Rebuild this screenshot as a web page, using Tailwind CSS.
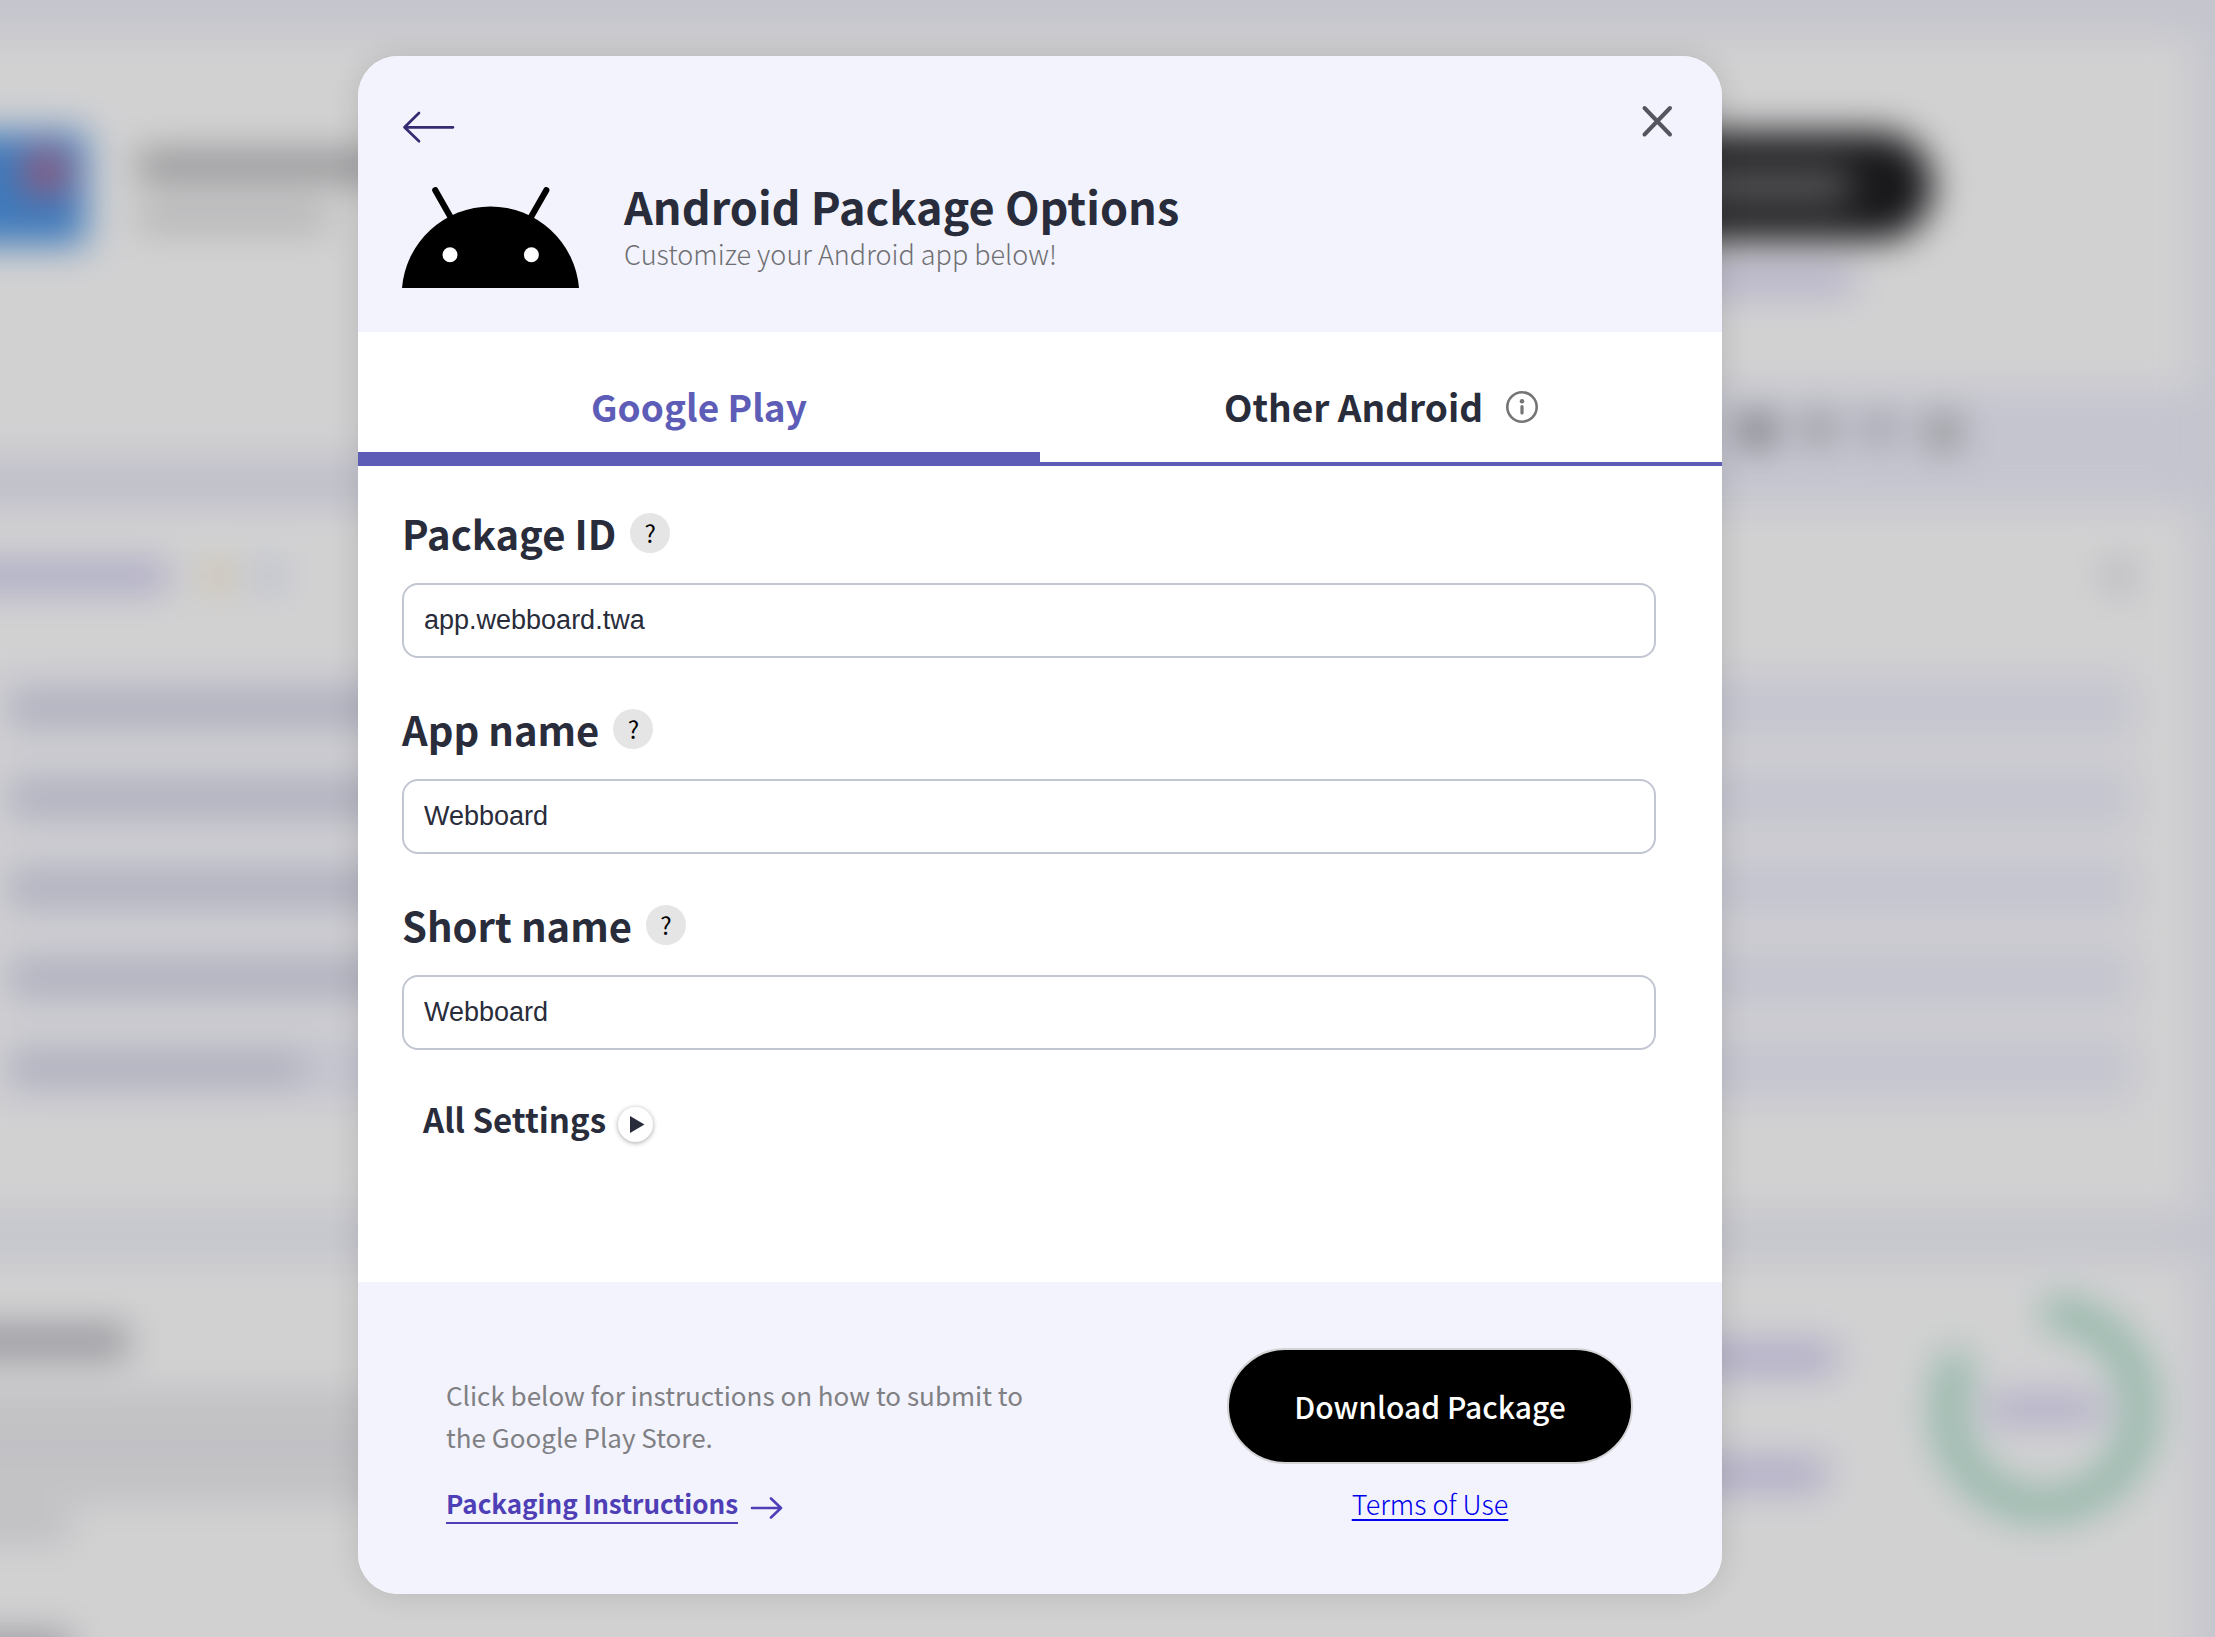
<!DOCTYPE html>
<html lang="en">
<head>
<meta charset="utf-8">
<title>Android Package Options</title>
<script src="https://cdn.jsdelivr.net/npm/@tailwindcss/browser@4"></script>
</head>
<body class="relative min-h-screen overflow-x-hidden bg-[#c5c5ce] font-['Noto_Sans_CJK_SC','Noto_Sans',sans-serif] text-[#292c3a]">

<!-- Report page, out of focus behind the dialog -->
<div aria-hidden="true" class="absolute inset-0 overflow-hidden">
  <div class="flex h-full flex-col pt-9 pr-5 blur-[18px]">
    <!-- App card -->
    <section class="-ml-20 flex h-[352px] flex-none justify-between bg-[#d1d1d2] pt-24">
      <div class="flex gap-[52px]">
        <div class="flex h-[113px] w-[166px] items-start justify-end bg-[#3f7abb] p-4"><div class="size-12 rounded-full bg-[#94597a]"></div></div>
        <div class="flex flex-col gap-7 pt-5">
          <div class="h-7 w-[250px] bg-[#8d8d8f]"></div>
          <div class="h-5 w-[190px] bg-[#a8a8aa]"></div>
        </div>
      </div>
      <div class="flex flex-col items-start gap-7 pr-[262px]">
        <div class="flex h-[108px] w-[400px] items-center rounded-full bg-[#18181a] px-20"><div class="h-9 w-[270px] rounded-full bg-[#58585a]"></div></div>
        <div class="h-6 w-[320px] bg-[#aeaac6]"></div>
      </div>
    </section>
    <div class="-ml-20 flex h-[116px] flex-none items-start justify-end">
      <div class="h-full flex-1 bg-[#d1d1d2] pt-[70px]"><div class="h-[46px] bg-[#bfbfca]"></div></div>
      <div class="flex h-full w-[900px] justify-end gap-7 bg-[#c5c5d0] pt-6 pr-[232px]">
        <div class="size-9 rounded-full bg-[#6c6c70]"></div>
        <div class="size-8 rounded-full bg-[#8a8a8e]"></div>
        <div class="size-8 rounded-full bg-[#96969e]"></div>
        <div class="size-10 rounded-full bg-[#929295]"></div>
      </div>
    </div>
    <!-- Action items card -->
    <section class="-ml-20 mt-1 h-[704px] flex-none bg-[#d1d1d2] pt-[52px] pr-[60px] pl-20">
      <div class="flex h-8 items-center justify-between">
        <div class="-ml-20 flex items-center">
          <div class="h-7 w-[248px] bg-[#a9a6c4]"></div>
          <div class="ml-9 size-7 rounded-full bg-[#cbbb9c]"></div>
          <div class="ml-6 size-6 rounded-full bg-[#aab0cc]"></div>
        </div>
        <div class="size-8 rounded-full bg-[#b2b2b8]"></div>
      </div>
      <div class="mt-[84px] flex flex-col gap-[26px]">
        <div class="flex h-16 items-center bg-[#c5c5d0] pl-3"><div class="h-6 w-[400px] bg-[#a9a9b7]"></div></div>
        <div class="flex h-16 items-center bg-[#c5c5d0] pl-3"><div class="h-6 w-[400px] bg-[#a9a9b7]"></div></div>
        <div class="flex h-16 items-center bg-[#c5c5d0] pl-3"><div class="h-6 w-[400px] bg-[#a9a9b7]"></div></div>
        <div class="flex h-16 items-center bg-[#c5c5d0] pl-3"><div class="h-6 w-[400px] bg-[#a9a9b7]"></div></div>
        <div class="flex h-16 items-center bg-[#c5c5d0] pl-3"><div class="h-6 w-[290px] bg-[#a9a9b7]"></div></div>
      </div>
    </section>
    <!-- Manifest card -->
    <section class="-ml-20 mt-12 flex h-[480px] flex-none justify-between bg-[#d1d1d2] pt-[36px] pr-[38px]">
      <div class="pt-[30px]">
        <div class="h-8 w-[208px] bg-[#95959b]"></div>
        <div class="mt-9 flex w-[580px] flex-col gap-4">
          <div class="h-6 bg-[#bbbbbf]"></div>
          <div class="h-6 bg-[#b6b6bb]"></div>
          <div class="h-6 bg-[#bbbbbf]"></div>
          <div class="h-6 w-[150px] bg-[#b8b8bc]"></div>
        </div>
        <div class="mt-24 h-8 w-[150px] bg-[#95959b]"></div>
      </div>
      <div class="flex">
        <div class="flex w-[420px] flex-col gap-[88px] pt-[48px]">
          <div class="h-7 w-[325px] bg-[#a9a5c4]"></div>
          <div class="h-7 w-[315px] bg-[#a9a5c4]"></div>
        </div>
        <svg class="size-[226px]" viewBox="0 0 226 226" fill="none">
          <path d="M113 16A97 97 0 1 1 32 60" stroke="#95b8aa" stroke-width="35"/>
          <path d="M56 113H172" stroke="#b0acc8" stroke-width="28"/>
        </svg>
      </div>
    </section>
  </div>
</div>

<div class="relative flex justify-center pt-14 pb-[43px] xl:pr-[135px]">
  <main role="dialog" aria-modal="true" aria-labelledby="dialog-title" class="w-full max-w-[1364px] overflow-hidden rounded-[40px] bg-white shadow-[0_0_30px_rgba(0,0,0,0.12)]">

    <header class="bg-[#f2f3fc] px-11 pt-12 pb-11">
      <div class="flex items-start justify-between">
        <button type="button" aria-label="Back" class="flex h-[46px] items-center">
          <svg width="54" height="34" viewBox="0 0 54 34" fill="none" stroke="#352b72" stroke-width="2.7" stroke-linecap="round" stroke-linejoin="round"><path d="M17 3 2.500 17.300 17 31.300M2.500 17.300H51"/></svg>
        </button>
        <button type="button" aria-label="Close" class="flex h-[34px] items-center pr-1">
          <svg width="34" height="34" viewBox="0 0 34 34" fill="none" stroke="#54555f" stroke-width="4" stroke-linecap="round"><path d="M4.500 4 30 30.500M30 4 4.500 30.500"/></svg>
        </button>
      </div>
      <div class="mt-[29px] flex min-h-[109px] gap-[45px]">
        <svg class="h-[101px] w-[177px] flex-none self-end" viewBox="0 0 177 101">
          <path d="M0 101A88.800 88.800 0 0 1 177 101Z"/>
          <path d="M33.300 3.200 48.500 30M144.300 3.200 129 30" fill="none" stroke="#000" stroke-width="6.200" stroke-linecap="round"/>
          <circle cx="48" cy="67.700" r="7.500" fill="#fff"/><circle cx="129.400" cy="67.700" r="7.500" fill="#fff"/>
        </svg>
        <div>
          <h1 id="dialog-title" class="text-[45px] leading-[54px] font-bold">Android Package Options</h1>
          <p class="text-[27px] leading-[42px] font-light text-[#6f6f73]">Customize your Android app below!</p>
        </div>
      </div>
    </header>

    <div role="tablist" class="grid grid-cols-2 text-[37px] leading-[56px] font-bold">
      <button type="button" role="tab" aria-selected="true" class="flex h-[134px] items-start justify-center border-b-[14px] border-[#5d5db8] pt-[46px] text-[#5d5db8]">Google Play</button>
      <button type="button" role="tab" aria-selected="false" class="flex h-[134px] items-start justify-center gap-[23px] border-b-4 border-[#5d5db8] pt-[46px]">Other Android
        <svg class="mt-[13px]" width="32" height="32" viewBox="0 0 32 32" fill="none"><circle cx="16" cy="16" r="14.700" stroke="#757575" stroke-width="2.600"/><circle cx="16" cy="10.300" r="2.300" fill="#757575"/><path d="M16 15.500V22" stroke="#757575" stroke-width="3.200" stroke-linecap="round"/></svg>
      </button>
    </div>

    <form class="min-h-[816px] pt-[39px] pr-[66px] pb-11 pl-11">
      <div class="flex flex-col gap-[43px]">
        <div>
          <div class="flex items-center gap-[14px]">
            <label for="package-id" class="text-[40px] leading-[56px] font-bold">Package ID</label>
            <button type="button" aria-label="About Package ID" class="flex size-10 items-center justify-center rounded-full bg-[#e5e5e5] text-2xl text-black">?</button>
          </div>
          <input id="package-id" type="text" value="app.webboard.twa" class="mt-[22px] block h-[75px] w-full rounded-2xl border-2 border-[#c2c6d1] bg-white px-5 font-['Liberation_Sans',Arial,sans-serif] text-[27px]">
        </div>
        <div>
          <div class="flex items-center gap-[14px]">
            <label for="app-name" class="text-[40px] leading-[56px] font-bold">App name</label>
            <button type="button" aria-label="About App name" class="flex size-10 items-center justify-center rounded-full bg-[#e5e5e5] text-2xl text-black">?</button>
          </div>
          <input id="app-name" type="text" value="Webboard" class="mt-[22px] block h-[75px] w-full rounded-2xl border-2 border-[#c2c6d1] bg-white px-5 font-['Liberation_Sans',Arial,sans-serif] text-[27px]">
        </div>
        <div>
          <div class="flex items-center gap-[14px]">
            <label for="short-name" class="text-[40px] leading-[56px] font-bold">Short name</label>
            <button type="button" aria-label="About Short name" class="flex size-10 items-center justify-center rounded-full bg-[#e5e5e5] text-2xl text-black">?</button>
          </div>
          <input id="short-name" type="text" value="Webboard" class="mt-[22px] block h-[75px] w-full rounded-2xl border-2 border-[#c2c6d1] bg-white px-5 font-['Liberation_Sans',Arial,sans-serif] text-[27px]">
        </div>
      </div>
      <button type="button" aria-expanded="false" class="mt-[49px] ml-[21px] flex h-[43px] items-start gap-3">
        <span class="text-[33px] leading-10 font-bold">All Settings</span>
        <span class="flex size-[35px] items-center justify-center self-end rounded-full bg-white shadow-[0_1px_5px_rgba(0,0,0,0.35)]">
          <svg width="35" height="35" viewBox="0 0 35 35" fill="#292c3a"><path d="M12 9 26.500 17.500 12 26Z"/></svg>
        </span>
      </button>
    </form>

    <footer class="flex items-end justify-between gap-8 bg-[#f2f3fc] pt-[66px] pr-[89px] pb-[70px] pl-[88px]">
      <div class="max-w-[600px]">
        <p class="text-[26px] leading-[42px] text-[#808084]">Click below for instructions on how to submit to the Google Play Store.</p>
        <a href="#instructions" class="mt-[26px] flex items-center gap-3 text-[#4f3fb6]">
          <span class="border-b-2 border-[#4f3fb6] text-[26px] leading-[38px] font-bold">Packaging Instructions</span>
          <svg class="mt-2" width="34" height="24" viewBox="0 0 34 24" fill="none" stroke="#4f3fb6" stroke-width="2.600" stroke-linecap="round" stroke-linejoin="round"><path d="M2 12H31M21 2.500 31 12 21 21.500"/></svg>
        </a>
      </div>
      <div class="flex flex-none flex-col items-center gap-5">
        <button type="button" class="h-[116px] w-[406px] rounded-full border-2 border-[#d3d3d6] bg-black text-[30px] font-medium text-white">Download Package</button>
        <a href="#terms" class="text-[27px] leading-10 font-light text-[#0000ee] underline decoration-2 underline-offset-4">Terms of Use</a>
      </div>
    </footer>
  </main>
</div>
</body>
</html>
